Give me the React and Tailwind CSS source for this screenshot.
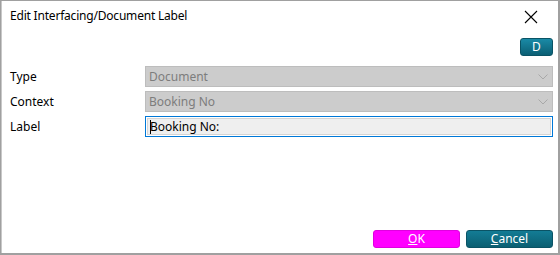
export default function App() {
  const font = { fontFamily: '"Segoe UI", "Noto Sans", "Open Sans", sans-serif' };
  return (
    <div className="w-[560px] h-[255px] bg-[#a0a0a0] p-[1px] pb-[2px] pr-[2px]" style={font}>
      <div className="w-full h-full bg-white flex flex-col relative border-l border-[#c8c8c8]">
        <div className="h-[30px] flex items-center justify-between pl-[8px] pr-[20px]">
          <span className="text-[12px] text-[#000000] leading-none tracking-[-0.2px]">Edit Interfacing/Document Label</span>
          <svg width="14" height="14" viewBox="0 0 14 14" className="mt-[1px]">
            <path d="M1 1L13 13M13 1L1 13" stroke="#000" strokeWidth="1.1" fill="none" />
          </svg>
        </div>
        <div className="flex justify-end pr-[5px] mt-[7px]">
          <button className="w-[33px] h-[18px] rounded-[3px] bg-gradient-to-b from-[#1a8aa6] to-[#0b5f74] text-white text-[12px] leading-none flex items-center justify-center border border-[#0a5365]">D</button>
        </div>
        <div className="flex flex-col gap-[4px] mt-[10px] pr-[5px]">
          <div className="flex items-center h-[21px]">
            <span className="w-[143px] pl-[8px] text-[12px] text-[#000]">Type</span>
            <div className="flex-1 h-[21px] bg-[#cccccc] border border-[#bdbdbd] flex items-center justify-between pl-[3px] pr-[4px]">
              <span className="text-[12px] text-[#7d7d7d]">Document</span>
              <svg width="10" height="6" viewBox="0 0 10 6"><path d="M0.5 0.5L5 5L9.5 0.5" stroke="#a8a8a8" fill="none" /></svg>
            </div>
          </div>
          <div className="flex items-center h-[21px]">
            <span className="w-[143px] pl-[8px] text-[12px] text-[#000]">Context</span>
            <div className="flex-1 h-[21px] bg-[#cccccc] border border-[#bdbdbd] flex items-center justify-between pl-[3px] pr-[4px]">
              <span className="text-[12px] text-[#7d7d7d]">Booking No</span>
              <svg width="10" height="6" viewBox="0 0 10 6"><path d="M0.5 0.5L5 5L9.5 0.5" stroke="#a8a8a8" fill="none" /></svg>
            </div>
          </div>
          <div className="flex items-center h-[21px]">
            <span className="w-[143px] pl-[8px] text-[12px] text-[#000]">Label</span>
            <div className="flex-1 h-[21px] bg-white border border-[#0078d7] p-[1px]">
              <div className="w-full h-full bg-[#efefef] border border-[#d4d4d4] flex items-center pl-[2px]">
                <span className="w-[1px] h-[14px] bg-black mr-[-1px]"></span>
                <span className="text-[12px] text-[#000]">Booking No:</span>
              </div>
            </div>
          </div>
        </div>
        <div className="flex-1"></div>
        <div className="flex justify-end gap-[6px] pr-[5px] pb-[5px]">
          <button className="w-[87px] h-[18px] rounded-[3px] bg-[#ff00ff] border border-[#e000e0] text-white text-[12px] leading-none flex items-center justify-center"><span><span className="underline">O</span>K</span></button>
          <button className="w-[87px] h-[18px] rounded-[3px] bg-gradient-to-b from-[#137c95] to-[#0b5f72] border border-[#0a5365] text-white text-[12px] leading-none flex items-center justify-center"><span><span className="underline">C</span>ancel</span></button>
        </div>
      </div>
    </div>
  );
}
